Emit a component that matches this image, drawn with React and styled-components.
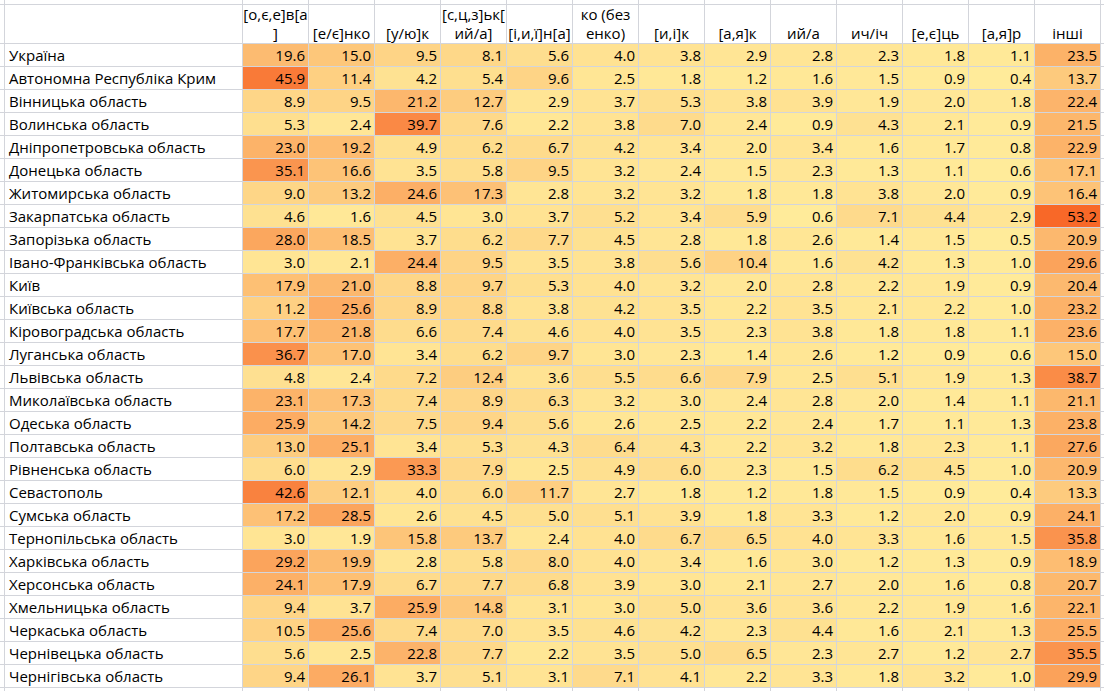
import React from "react";
import styled, { createGlobalStyle } from "styled-components";

const GlobalStyle = createGlobalStyle`
  html, body {
    margin: 0;
    padding: 0;
    background: #ffffff;
    overflow: hidden;
  }
`;

const headers = [
  ["[о,є,е]в[а", "]"],
  ["[е/є]нко"],
  ["[у/ю]к"],
  ["[с,ц,з]ьк[", "ий/а]"],
  ["[і,и,ї]н[а]"],
  ["ко (без", "енко)"],
  ["[и,і]к"],
  ["[а,я]к"],
  ["ий/а"],
  ["ич/іч"],
  ["[е,є]ць"],
  ["[а,я]р"],
  ["інші"],
];

const rows = [
  ["Україна", 19.6, 15.0, 9.5, 8.1, 5.6, 4.0, 3.8, 2.9, 2.8, 2.3, 1.8, 1.1, 23.5],
  ["Автономна Республіка Крим", 45.9, 11.4, 4.2, 5.4, 9.6, 2.5, 1.8, 1.2, 1.6, 1.5, 0.9, 0.4, 13.7],
  ["Вінницька область", 8.9, 9.5, 21.2, 12.7, 2.9, 3.7, 5.3, 3.8, 3.9, 1.9, 2.0, 1.8, 22.4],
  ["Волинська область", 5.3, 2.4, 39.7, 7.6, 2.2, 3.8, 7.0, 2.4, 0.9, 4.3, 2.1, 0.9, 21.5],
  ["Дніпропетровська область", 23.0, 19.2, 4.9, 6.2, 6.7, 4.2, 3.4, 2.0, 3.4, 1.6, 1.7, 0.8, 22.9],
  ["Донецька область", 35.1, 16.6, 3.5, 5.8, 9.5, 3.2, 2.4, 1.5, 2.3, 1.3, 1.1, 0.6, 17.1],
  ["Житомирська область", 9.0, 13.2, 24.6, 17.3, 2.8, 3.2, 3.2, 1.8, 1.8, 3.8, 2.0, 0.9, 16.4],
  ["Закарпатська область", 4.6, 1.6, 4.5, 3.0, 3.7, 5.2, 3.4, 5.9, 0.6, 7.1, 4.4, 2.9, 53.2],
  ["Запорізька область", 28.0, 18.5, 3.7, 6.2, 7.7, 4.5, 2.8, 1.8, 2.6, 1.4, 1.5, 0.5, 20.9],
  ["Івано-Франківська область", 3.0, 2.1, 24.4, 9.5, 3.5, 3.8, 5.6, 10.4, 1.6, 4.2, 1.3, 1.0, 29.6],
  ["Київ", 17.9, 21.0, 8.8, 9.7, 5.3, 4.0, 3.2, 2.0, 2.8, 2.2, 1.9, 0.9, 20.4],
  ["Київська область", 11.2, 25.6, 8.9, 8.8, 3.8, 4.2, 3.5, 2.2, 3.5, 2.1, 2.2, 1.0, 23.2],
  ["Кіровоградська область", 17.7, 21.8, 6.6, 7.4, 4.6, 4.0, 3.5, 2.3, 3.8, 1.8, 1.8, 1.1, 23.6],
  ["Луганська область", 36.7, 17.0, 3.4, 6.2, 9.7, 3.0, 2.3, 1.4, 2.6, 1.2, 0.9, 0.6, 15.0],
  ["Львівська область", 4.8, 2.4, 7.2, 12.4, 3.6, 5.5, 6.6, 7.9, 2.5, 5.1, 1.9, 1.3, 38.7],
  ["Миколаївська область", 23.1, 17.3, 7.4, 8.9, 6.3, 3.2, 3.0, 2.4, 2.8, 2.0, 1.4, 1.1, 21.1],
  ["Одеська область", 25.9, 14.2, 7.5, 9.4, 5.6, 2.6, 2.5, 2.2, 2.4, 1.7, 1.1, 1.3, 23.8],
  ["Полтавська область", 13.0, 25.1, 3.4, 5.3, 4.3, 6.4, 4.3, 2.2, 3.2, 1.8, 2.3, 1.1, 27.6],
  ["Рівненська область", 6.0, 2.9, 33.3, 7.9, 2.5, 4.9, 6.0, 2.3, 1.5, 6.2, 4.5, 1.0, 20.9],
  ["Севастополь", 42.6, 12.1, 4.0, 6.0, 11.7, 2.7, 1.8, 1.2, 1.8, 1.5, 0.9, 0.4, 13.3],
  ["Сумська область", 17.2, 28.5, 2.6, 4.5, 5.0, 5.1, 3.9, 1.8, 3.3, 1.2, 2.0, 0.9, 24.1],
  ["Тернопільська область", 3.0, 1.9, 15.8, 13.7, 2.4, 4.0, 6.7, 6.5, 4.0, 3.3, 1.6, 1.5, 35.8],
  ["Харківська область", 29.2, 19.9, 2.8, 5.8, 8.0, 4.0, 3.4, 1.6, 3.0, 1.2, 1.3, 0.9, 18.9],
  ["Херсонська область", 24.1, 17.9, 6.7, 7.7, 6.8, 3.9, 3.0, 2.1, 2.7, 2.0, 1.6, 0.8, 20.7],
  ["Хмельницька область", 9.4, 3.7, 25.9, 14.8, 3.1, 3.0, 5.0, 3.6, 3.6, 2.2, 1.9, 1.6, 22.1],
  ["Черкаська область", 10.5, 25.6, 7.4, 7.0, 3.5, 4.6, 4.2, 2.3, 4.4, 1.6, 2.1, 1.3, 25.5],
  ["Чернівецька область", 5.6, 2.5, 22.8, 7.7, 2.2, 3.5, 5.0, 6.5, 2.3, 2.7, 1.2, 2.7, 35.5],
  ["Чернігівська область", 9.4, 26.1, 3.7, 5.1, 3.1, 7.1, 4.1, 2.2, 3.3, 1.8, 3.2, 1.0, 29.9],
];

// colour scale: pale yellow for the lowest value, orange for the highest
const LOW = [255, 235, 154];
const HIGH = [248, 104, 40];
const MIN = 0.4;
const MAX = 53.2;

const scaleColor = (value) => {
  const t = Math.max(0, Math.min(1, (value - MIN) / (MAX - MIN)));
  const c = LOW.map((l, i) => Math.round(l + (HIGH[i] - l) * t));
  return `rgb(${c[0]}, ${c[1]}, ${c[2]})`;
};

const COLS = 16;

const Sheet = styled.div`
  display: grid;
  grid-template-columns: 4px 237px repeat(13, 65px) 1fr;
  grid-template-rows: 4px 38px repeat(28, 22px) 1fr;
  gap: 1px;
  height: 100vh;
  background: #d3d5db;
  font-family: "Open Sans", "Noto Sans", sans-serif;
  font-size: 15px;
  color: #000000;
`;

const Blank = styled.div`
  background: #ffffff;
`;

const HeadCell = styled.div`
  background: #ffffff;
  display: flex;
  flex-direction: column;
  justify-content: flex-end;
  align-items: center;
  line-height: 19px;
  text-align: center;
  white-space: nowrap;
  overflow: hidden;
`;

const LabelCell = styled.div`
  background: #ffffff;
  display: flex;
  align-items: center;
  padding-left: 4px;
  white-space: nowrap;
  overflow: hidden;
`;

const ValueCell = styled.div`
  background: ${(p) => p.$fill};
  display: flex;
  align-items: center;
  justify-content: flex-end;
  padding-right: 3px;
  white-space: nowrap;
`;

const blanks = (key, n) =>
  Array.from({ length: n }, (_, i) => <Blank key={`${key}-${i}`} />);

export default function App() {
  return (
    <>
      <GlobalStyle />
      <Sheet>
        {blanks("top", COLS)}

        <Blank />
        <HeadCell />
        {headers.map((lines, i) => (
          <HeadCell key={`h-${i}`}>
            {lines.map((line) => (
              <span key={line}>{line}</span>
            ))}
          </HeadCell>
        ))}
        <Blank />

        {rows.map(([name, ...values]) => (
          <React.Fragment key={name}>
            <Blank />
            <LabelCell>{name}</LabelCell>
            {values.map((v, i) => (
              <ValueCell key={i} $fill={scaleColor(v)}>
                {v.toFixed(1)}
              </ValueCell>
            ))}
            <Blank />
          </React.Fragment>
        ))}

        {blanks("bottom", COLS)}
      </Sheet>
    </>
  );
}
